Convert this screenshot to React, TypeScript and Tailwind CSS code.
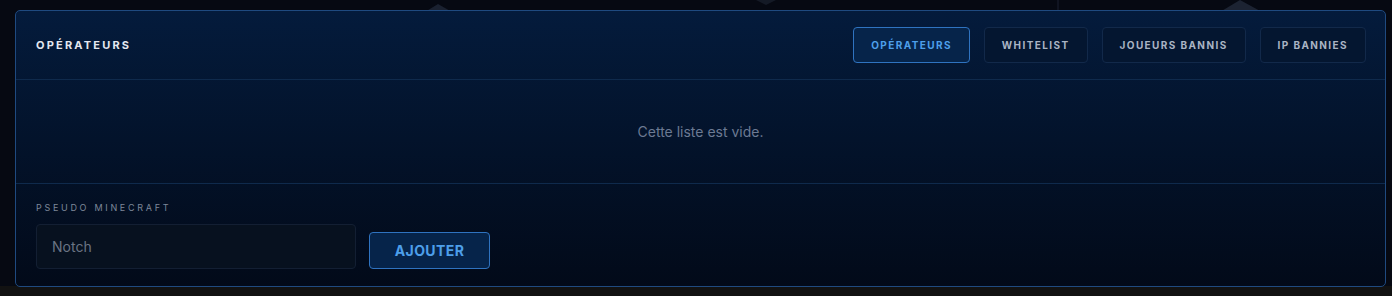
import { useState } from 'react';

const TABS = ['Opérateurs', 'Whitelist', 'Joueurs bannis', 'IP bannies'];

export default function App() {
  const [activeTab, setActiveTab] = useState('Opérateurs');
  const [pseudo, setPseudo] = useState('');

  return (
    <div className="relative h-[296px] w-full overflow-hidden bg-[#121212] font-['Inter',sans-serif]">
      {/* fond décoratif */}
      <div className="absolute inset-x-0 top-0 h-[286px] bg-[#060912]">
        <svg className="absolute left-0 top-0" width="1392" height="12" viewBox="0 0 1392 12">
          <polygon points="425,12 438,4 452,12" fill="#1a2130" />
          <polygon points="756,0 766,5 776,0" fill="#141a26" />
          <line x1="1058" y1="0" x2="1058" y2="10" stroke="#1a2130" strokeWidth="1" />
          <polygon points="1220,12 1240,0 1262,12" fill="#1c2332" />
        </svg>
      </div>

      <section className="relative ml-[15px] mt-[10px] flex h-[277px] w-[1371px] flex-col rounded-[5px] border border-[#1f4a80] bg-gradient-to-b from-[#041b3c] to-[#020a19]">
        {/* en-tête */}
        <header className="flex h-[69px] items-center justify-between border-b border-[#0f2a4c] pl-[20px] pr-[19px]">
          <h2 className="text-[11px] font-bold tracking-[0.2em] text-[#e4e8f0] uppercase">Opérateurs</h2>
          <div className="flex gap-[14px]">
            {TABS.map((tab) => (
              <button
                key={tab}
                onClick={() => setActiveTab(tab)}
                className={`h-[36px] rounded-[4px] border px-[17px] text-[10px] font-bold tracking-[0.14em] uppercase ${
                  activeTab === tab
                    ? 'border-[#2f73c0] bg-[#06244a] text-[#4d9fea]'
                    : 'border-[#12294a] bg-[#041630] text-[#aab4c4]'
                }`}
              >
                {tab}
              </button>
            ))}
          </div>
        </header>

        {/* liste */}
        <div className="flex h-[104px] items-center justify-center border-b border-[#0f2a4c]">
          <p className="text-[14px] text-[#6c7a93]">Cette liste est vide.</p>
        </div>

        {/* ajout */}
        <div className="flex flex-1 flex-col px-[20px] pt-[17px]">
          <label className="text-[9px] tracking-[0.3em] text-[#7d8799] uppercase">Pseudo Minecraft</label>
          <div className="mt-[9px] flex items-end gap-[13px]">
            <input
              value={pseudo}
              onChange={(e) => setPseudo(e.target.value)}
              placeholder="Notch"
              className="h-[45px] w-[320px] rounded-[4px] border border-[#131f33] bg-[#07111f] px-[15px] text-[14px] text-[#c8d0dc] outline-none placeholder:text-[#6b7484]"
            />
            <button className="h-[37px] w-[121px] rounded-[4px] border border-[#2f73c0] bg-[#06244a] text-[14px] font-bold tracking-[0.03em] text-[#4d9fea] uppercase">
              Ajouter
            </button>
          </div>
        </div>
      </section>
    </div>
  );
}
